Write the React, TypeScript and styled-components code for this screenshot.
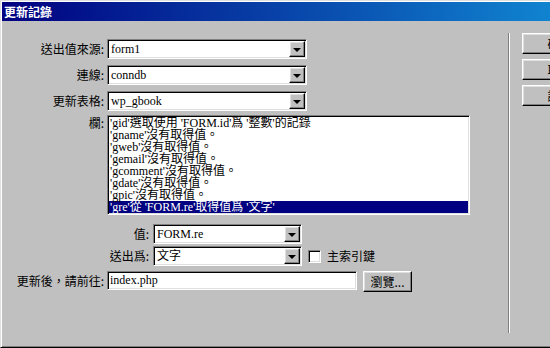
import styled, { createGlobalStyle } from "styled-components";

const GlobalStyle = createGlobalStyle`
  html, body {
    margin: 0;
    padding: 0;
    background: #c0c0c0;
    overflow: hidden;
  }
  body {
    width: 550px;
    height: 348px;
    font-family: "Noto Sans CJK TC", "Liberation Sans", sans-serif;
    font-size: 12px;
    color: #000;
  }
`;

const serif = `"Liberation Serif", "Noto Sans CJK TC", serif`;

const Window = styled.div`
  width: 600px;
  height: 348px;
  box-sizing: border-box;
  background: #c0c0c0;
  border-top: 1px solid #dfdfdf;
  border-left: 1px solid #dfdfdf;
  border-bottom: 1px solid #000;
  box-shadow: inset 1px 1px #fff, inset 0 -1px #808080;
  padding: 1px 1px 0 1px;
  display: flex;
  flex-direction: column;
`;

const TitleBar = styled.div`
  height: 19px;
  display: flex;
  align-items: center;
  padding-left: 2px;
  background: linear-gradient(90deg, #000080 0, #1084d0 550px);
  color: #fff;
  font-weight: 700;
  font-size: 12px;
  line-height: 14px;
`;

const Body = styled.div`
  display: flex;
  padding-left: 3px;
`;

const Form = styled.div`
  width: 503px;
  padding-top: 18px;
  display: flex;
  flex-direction: column;
`;

const Row = styled.div<{ $top?: number; $align?: string }>`
  display: grid;
  grid-template-columns: 99px auto;
  column-gap: 3px;
  align-items: ${(p) => p.$align ?? "center"};
  margin-top: ${(p) => p.$top ?? 0}px;
`;

const Label = styled.div<{ $pad?: number }>`
  text-align: right;
  white-space: nowrap;
  line-height: 14px;
  padding-top: ${(p) => p.$pad ?? 0}px;
`;

const sunken = `
  border: 1px solid;
  border-color: #808080 #fff #fff #808080;
  box-shadow: inset 1px 1px #000, inset -1px -1px #dfdfdf;
  background: #fff;
  box-sizing: border-box;
`;

const raised = `
  border: 1px solid;
  border-color: #fff #000 #000 #fff;
  box-shadow: inset -1px -1px #808080, inset 1px 1px #dfdfdf;
  background: #c0c0c0;
  box-sizing: border-box;
`;

const Combo = styled.div<{ $w: number }>`
  ${sunken}
  width: ${(p) => p.$w}px;
  height: 20px;
  padding: 1px;
  display: flex;
  align-items: center;
`;

const ComboText = styled.div`
  flex: 1;
  padding-left: 2px;
  font-family: ${serif};
  font-size: 12px;
  line-height: 14px;
  white-space: nowrap;
  overflow: hidden;
`;

const DropButton = styled.div`
  ${raised}
  width: 16px;
  height: 16px;
  display: flex;
  align-items: center;
  justify-content: center;
`;

const Arrow = styled.div`
  width: 0;
  height: 0;
  border-left: 4px solid transparent;
  border-right: 4px solid transparent;
  border-top: 4px solid #000;
  margin-top: 1px;
`;

const ListBox = styled.div`
  ${sunken}
  width: 363px;
  height: 100px;
  padding: 1px;
  overflow: hidden;
`;

const ListItem = styled.div<{ $selected?: boolean }>`
  height: 12px;
  line-height: 12px;
  padding-left: 1px;
  white-space: nowrap;
  font-family: ${serif};
  font-size: 12px;
  background: ${(p) => (p.$selected ? "#000080" : "transparent")};
  color: ${(p) => (p.$selected ? "#fff" : "#000")};
`;

const SubGrid = styled.div`
  display: grid;
  grid-template-columns: 42px 149px auto;
  grid-auto-rows: 20px;
  column-gap: 4px;
  row-gap: 2px;
  align-items: center;
`;

const CheckRow = styled.label`
  display: flex;
  align-items: center;
  margin-left: 2px;
  white-space: nowrap;
  line-height: 14px;
`;

const Check = styled.span`
  ${sunken}
  width: 13px;
  height: 13px;
  margin-right: 6px;
`;

const Inline = styled.div`
  display: flex;
  align-items: flex-start;
  gap: 6px;
`;

const TextInput = styled.div<{ $w: number }>`
  ${sunken}
  width: ${(p) => p.$w}px;
  height: 19px;
  padding: 1px 2px;
  font-family: ${serif};
  font-size: 12px;
  line-height: 15px;
  white-space: nowrap;
`;

const PushButton = styled.button<{ $w: number }>`
  ${raised}
  width: ${(p) => p.$w}px;
  height: 21px;
  padding: 0;
  font-family: "Noto Sans CJK TC", "Liberation Sans", sans-serif;
  font-size: 12px;
  line-height: 14px;
  color: #000;
  flex-shrink: 0;
`;

const Separator = styled.div`
  width: 0;
  height: 300px;
  margin-top: 12px;
  border-left: 1px solid #808080;
  border-right: 1px solid #fff;
`;

const ButtonColumn = styled.div`
  display: flex;
  flex-direction: column;
  gap: 5px;
  margin-top: 12px;
  margin-left: 12px;
`;

const items = [
  "'gid'選取使用 'FORM.id'爲 '整數'的記錄",
  "'gname'沒有取得值。",
  "'gweb'沒有取得值。",
  "'gemail'沒有取得值。",
  "'gcomment'沒有取得值。",
  "'gdate'沒有取得值。",
  "'gpic'沒有取得值。",
  "'gre'從 'FORM.re'取得值爲 '文字'",
];

const ComboBox = ({ value, w }: { value: string; w: number }) => (
  <Combo $w={w}>
    <ComboText>{value}</ComboText>
    <DropButton>
      <Arrow />
    </DropButton>
  </Combo>
);

export default function App() {
  return (
    <>
      <GlobalStyle />
      <Window>
        <TitleBar>更新記錄</TitleBar>
        <Body>
          <Form>
            <Row>
              <Label>送出值來源:</Label>
              <ComboBox value="form1" w={200} />
            </Row>
            <Row $top={6}>
              <Label>連線:</Label>
              <ComboBox value="conndb" w={200} />
            </Row>
            <Row $top={6}>
              <Label>更新表格:</Label>
              <ComboBox value="wp_gbook" w={200} />
            </Row>
            <Row $top={4} $align="start">
              <Label $pad={1}>欄:</Label>
              <ListBox>
                {items.map((t, i) => (
                  <ListItem key={i} $selected={i === items.length - 1}>
                    {t}
                  </ListItem>
                ))}
              </ListBox>
            </Row>
            <Row $top={9}>
              <span />
              <SubGrid>
                <Label>值:</Label>
                <ComboBox value="FORM.re" w={149} />
                <span />
                <Label>送出爲:</Label>
                <ComboBox value="文字" w={149} />
                <CheckRow>
                  <Check />
                  主索引鍵
                </CheckRow>
              </SubGrid>
            </Row>
            <Row $top={5} $align="start">
              <Label $pad={3}>更新後，請前往:</Label>
              <Inline>
                <TextInput $w={250}>index.php</TextInput>
                <PushButton $w={49}>瀏覽...</PushButton>
              </Inline>
            </Row>
          </Form>
          <Separator />
          <ButtonColumn>
            <PushButton $w={75}>確定</PushButton>
            <PushButton $w={75}>取消</PushButton>
            <PushButton $w={75}>說明</PushButton>
          </ButtonColumn>
        </Body>
      </Window>
    </>
  );
}
